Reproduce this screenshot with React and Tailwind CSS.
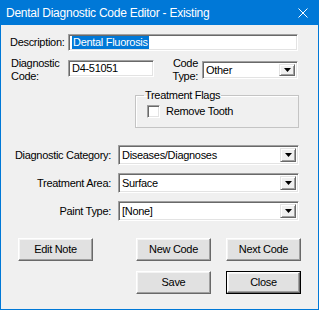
import React from 'react';

const font = "font-['Liberation_Sans',Arial,sans-serif]";

// classic sunken field (edit / combo)
const sunken =
  'border border-t-[#a0a0a0] border-l-[#a0a0a0] border-b-white border-r-white shadow-[inset_1px_1px_0_#696969,inset_-1px_-1px_0_#e3e3e3]';

const Field = ({ width, children, className = '' }) => (
  <div className={`${sunken} bg-white h-[17px] flex items-center pl-[3px] ${className}`} style={{ width }}>
    {children}
  </div>
);

const ComboBox = ({ width, height = 20, value }) => (
  <div
    className={`${sunken} bg-white flex items-center justify-between pl-[3px] pr-[2px]`}
    style={{ width, height }}
  >
    <span className="leading-[13px]">{value}</span>
    <div className="w-[16px] h-[calc(100%-4px)] bg-[#f0f0f0] border border-t-[#e3e3e3] border-l-[#e3e3e3] border-b-[#696969] border-r-[#696969] shadow-[inset_1px_1px_0_white,inset_-1px_-1px_0_#a0a0a0] flex items-center justify-center">
      <svg width="7" height="4" viewBox="0 0 7 4">
        <path d="M0 0h7L3.5 4z" fill="#000" />
      </svg>
    </div>
  </div>
);

const Button = ({ children, isDefault }) => (
  <div className={isDefault ? 'border border-black' : ''}>
    <button
      className={`${isDefault ? 'w-[73px] h-[21px]' : 'w-[75px] h-[23px]'} bg-[#e1e1e1] border border-t-white border-l-white border-b-[#696969] border-r-[#696969] shadow-[inset_-1px_-1px_0_#a0a0a0,inset_1px_1px_0_#f4f4f4] flex items-center justify-center leading-[13px]`}
    >
      {children}
    </button>
  </div>
);

export default function App() {
  return (
    <div className={`${font} text-[11px] tracking-[-0.3px] text-black w-[319px] h-[310px] bg-[#f0f0f0] border-x border-b border-[#0078d7] flex flex-col`}>
      <div className="h-[25px] bg-[#0078d7] flex items-center justify-between pl-[5px] pr-[10px] text-white">
        <span className="text-[12px] tracking-[-0.25px] leading-[14px]">Dental Diagnostic Code Editor - Existing</span>
        <svg width="10" height="10" viewBox="0 0 10 10">
          <path d="M0.5 0.5L9.5 9.5M9.5 0.5L0.5 9.5" stroke="white" strokeWidth="1" />
        </svg>
      </div>

      <div className="flex flex-col">
        {/* Description */}
        <div className="flex items-center mt-[9px]">
          <div className="w-[67px] pl-[9px]">Description:</div>
          <Field width={230}>
            <span className="bg-[#0078d7] text-white leading-[13px] px-[1px]">Dental Fluorosis</span>
          </Field>
        </div>

        {/* Diagnostic Code / Code Type */}
        <div className="flex items-start mt-[6px]">
          <div className="w-[67px] pl-[10px] leading-[13px]">
            Diagnostic
            <br />
            Code:
          </div>
          <Field width={86} className="mt-[3px]">
            <span className="leading-[13px]">D4-51051</span>
          </Field>
          <div className="w-[44px] text-right leading-[13px]">
            Code
            <br />
            Type:
          </div>
          <div className="ml-[4px] mt-[4px]">
            <ComboBox width={96} height={18} value="Other" />
          </div>
        </div>

        {/* Treatment Flags */}
        <fieldset className="ml-[134px] mt-[6px] w-[164px] h-[39px] border border-[#c4c4c4] shadow-[inset_1px_1px_0_white] pl-[11px]">
          <legend className="px-[1px] ml-[-3px] leading-[13px]">Treatment Flags</legend>
          <div className="flex items-center mt-[3px]">
            <div className={`${sunken} w-[13px] h-[13px] bg-white`} />
            <span className="ml-[6px] leading-[13px]">Remove Tooth</span>
          </div>
        </fieldset>

        {/* Combos */}
        <div className="flex flex-col gap-[8px] mt-[17px]">
          {[
            ['Diagnostic Category:', 'Diseases/Diagnoses'],
            ['Treatment Area:', 'Surface'],
            ['Paint Type:', '[None]'],
          ].map(([label, value]) => (
            <div key={label} className="flex items-center">
              <div className="w-[110px] text-right">{label}</div>
              <div className="ml-[7px]">
                <ComboBox width={181} value={value} />
              </div>
            </div>
          ))}
        </div>

        {/* Buttons */}
        <div className="flex mt-[17px] ml-[17px]">
          <Button>Edit Note</Button>
          <div className="ml-[43px]">
            <Button>New Code</Button>
          </div>
          <div className="ml-[15px]">
            <Button>Next Code</Button>
          </div>
        </div>
        <div className="flex mt-[10px] ml-[135px] gap-[15px]">
          <Button>Save</Button>
          <Button isDefault>Close</Button>
        </div>
      </div>
    </div>
  );
}
